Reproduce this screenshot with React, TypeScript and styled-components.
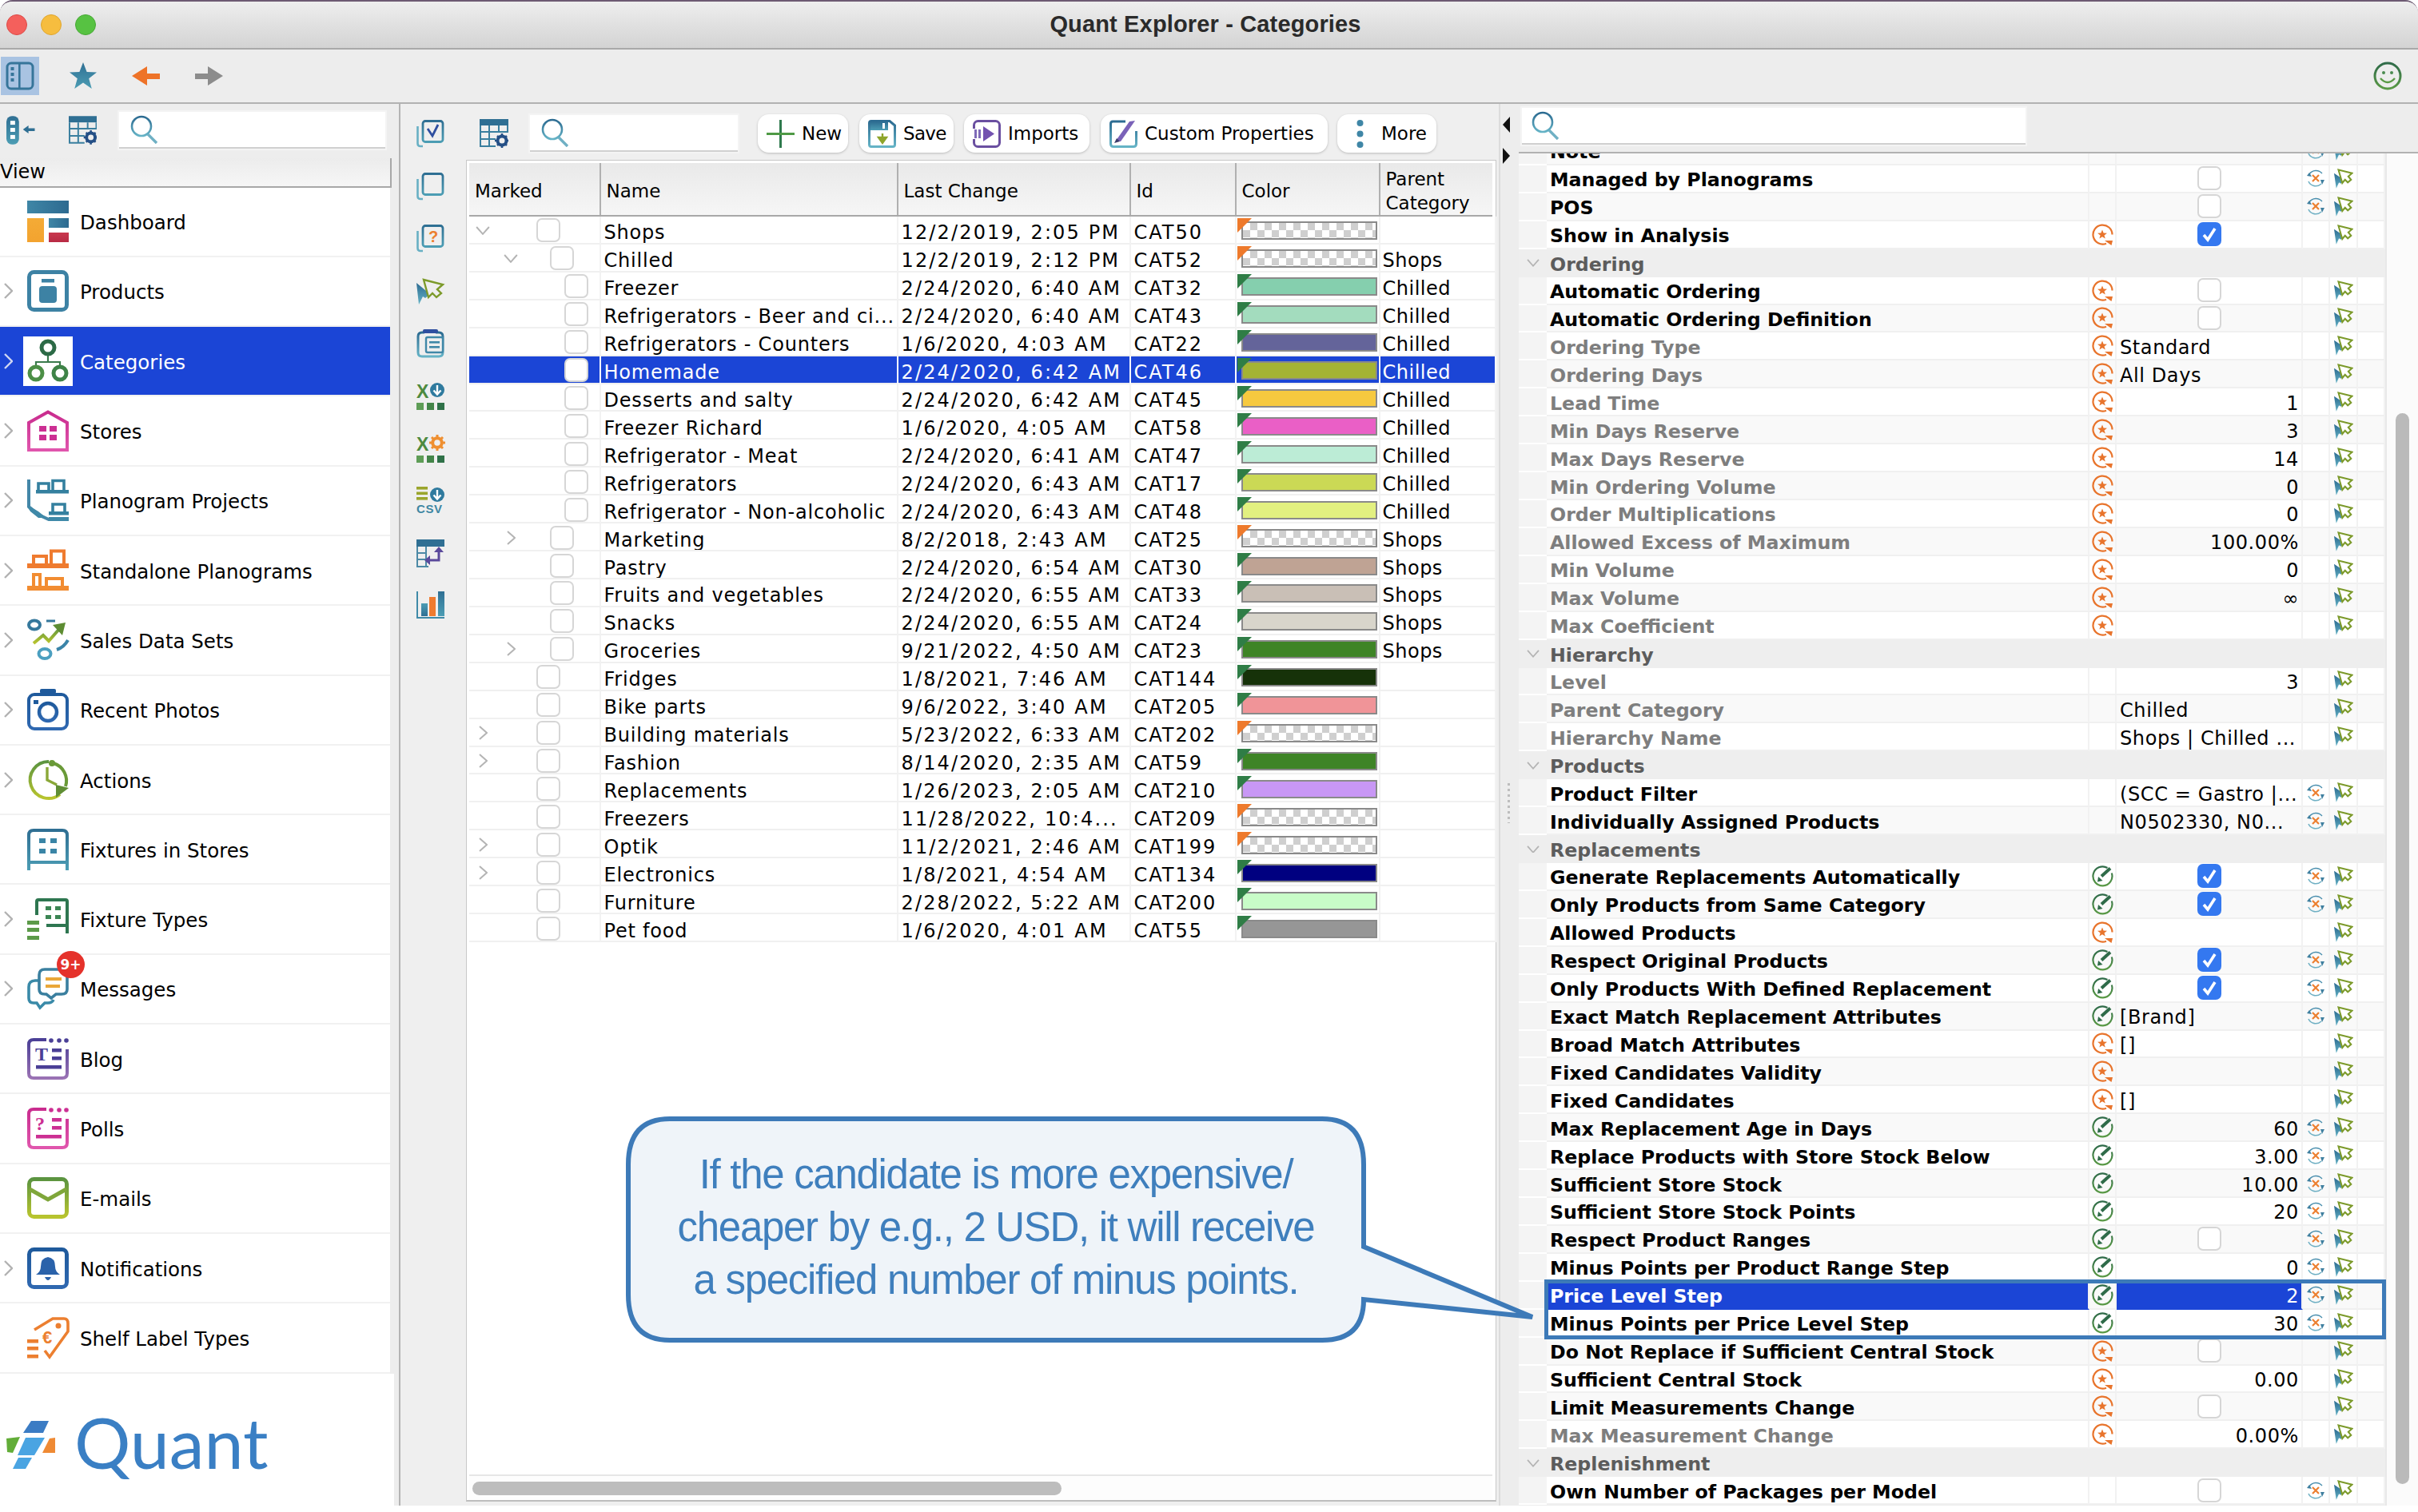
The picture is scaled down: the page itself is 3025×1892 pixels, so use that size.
import React from "react";
import styled, { createGlobalStyle } from "styled-components";

const UI = `"DejaVu Sans", "Liberation Sans", sans-serif`;

const Global = createGlobalStyle`
  html, body { margin: 0; padding: 0; background: #ffffff; }
  body { font-family: ${UI}; color: #000; }
  #root { width: 3025px; height: 1892px; overflow: hidden; }
  * { box-sizing: border-box; }
`;

/* ---------- shell ---------- */
const Page = styled.div`
  position: relative;
  width: 3025px;
  height: 1892px;
  background: #fff;
`;
const Window = styled.div`
  width: 3025px;
  height: 1884px;
  border-radius: 16px 16px 0 0;
  overflow: hidden;
  display: flex;
  flex-direction: column;
  background: #ededed;
  border-top: 2px solid #6d5a72;
`;
const TitleBar = styled.header`
  height: 60px;
  flex: none;
  display: grid;
  grid-template-columns: 1fr auto 1fr;
  align-items: center;
  background: linear-gradient(#eeeeee, #d3d3d3);
  border-bottom: 2px solid #a9a9a9;
`;
const Lights = styled.div`
  display: flex;
  gap: 17px;
  padding-left: 8px;
`;
const Light = styled.span<{ $c: string; $b: string }>`
  width: 26px;
  height: 26px;
  border-radius: 50%;
  background: ${(p) => p.$c};
  border: 1px solid ${(p) => p.$b};
`;
const Title = styled.h1`
  margin: 0 0 2px -9px;
  font: 700 29px "Liberation Sans", Arial, sans-serif;
  color: #2a2a2a;
  letter-spacing: 0.15px;
`;
const TopBar = styled.div`
  height: 68px;
  flex: none;
  display: flex;
  align-items: center;
  background: #ededed;
  border-bottom: 2px solid #b2b2b2;
`;
const ToggleBtn = styled.div`
  width: 48px;
  height: 48px;
  margin-left: 1px;
  background: #a9c3e2;
  display: flex;
  align-items: center;
  justify-content: center;
`;
const TopIcon = styled.div<{ $ml: number }>`
  margin-left: ${(p) => p.$ml}px;
  display: flex;
`;
const TopSpacer = styled.div`
  flex: 1;
`;
const Body = styled.div`
  flex: 1;
  min-height: 0;
  display: flex;
`;

/* ---------- left ---------- */
const LeftCol = styled.aside`
  width: 501px;
  flex: none;
  display: flex;
  flex-direction: column;
  border-right: 2px solid #b4b4b4;
  background: #ededed;
`;
const LeftTools = styled.div`
  height: 68px;
  flex: none;
  display: flex;
  align-items: center;
  padding: 0 17px 3px 8px;
`;
const Search = styled.div<{ $w: number }>`
  width: ${(p) => p.$w}px;
  height: 46px;
  background: #fff;
  border-bottom: 2px solid #d0d0d0;
  box-shadow: 0 0 0 2px #f4f4f4;
  display: flex;
  align-items: center;
  padding-left: 14px;
  flex: none;
`;
const ToolGap = styled.div<{ $w: number }>`
  width: ${(p) => p.$w}px;
  flex: none;
`;
const ViewHead = styled.div`
  width: 490px;
  height: 36.5px;
  flex: none;
  display: flex;
  align-items: center;
  font-size: 24px;
  background: linear-gradient(#ececec, #f6f6f6);
  border-right: 2px solid #a8a8a8;
  border-bottom: 2px solid #a8a8a8;
`;
const NavList = styled.nav`
  width: 488px;
  flex: none;
  background: #fff;
`;
const NavRow = styled.div<{ $on?: boolean }>`
  height: 87.3px;
  display: flex;
  align-items: center;
  border-bottom: 2px solid #f1f1f1;
  background: ${(p) => (p.$on ? "#1b45d6" : "#fff")};
  color: ${(p) => (p.$on ? "#fff" : "#000")};
`;
const NavChevron = styled.div`
  width: 34px;
  flex: none;
  padding-left: 5px;
  display: flex;
`;
const NavIcon = styled.div<{ $on?: boolean }>`
  position: relative;
  width: 52px;
  height: 52px;
  flex: none;
  background: ${(p) => (p.$on ? "#fff" : "transparent")};
  box-shadow: ${(p) => (p.$on ? "0 0 0 5px #fff" : "none")};
`;
const Badge = styled.span`
  position: absolute;
  left: 37px;
  top: -21px;
  width: 35px;
  height: 34px;
  border-radius: 50%;
  background: #e5322b;
  color: #fff;
  font: 700 17px ${UI};
  display: flex;
  align-items: center;
  justify-content: center;
`;
const NavLabel = styled.span`
  margin-left: 14px;
  padding-top: 3px;
  font-size: 24.5px;
`;
const LogoArea = styled.div`
  flex: 1;
  width: 493px;
  background: #fff;
  display: flex;
  align-items: flex-start;
  padding: 58px 0 0 7px;
`;
const LogoText = styled.span`
  margin: -23px 0 0 22px;
  font: 400 88px/100px Lato, "Open Sans", sans-serif;
  color: #3a7fc4;
`;

/* ---------- center ---------- */
const Center = styled.main`
  width: 1376px;
  flex: none;
  display: flex;
  background: #efefef;
  border-right: 2px solid #dcdcdc;
`;
const Strip = styled.div`
  width: 82px;
  flex: none;
  display: flex;
  flex-direction: column;
  align-items: center;
  gap: 30.6px;
  padding: 20px 7px 0 0;
`;
const CenterMain = styled.div`
  flex: 1;
  min-width: 0;
  display: flex;
  flex-direction: column;
  padding-right: 3px;
`;
const CenterTools = styled.div`
  height: 70px;
  flex: none;
  display: flex;
  align-items: center;
  padding: 4px 0 0 17px;
`;
const ToolButton = styled.button<{ $w: number; $mr: number; $sp?: number }>`
  width: ${(p) => p.$w}px;
  height: 48px;
  flex: none;
  display: flex;
  align-items: center;
  gap: 9px;
  padding: 0 0 0 11px;
  margin-right: ${(p) => p.$mr}px;
  border: 0;
  border-radius: 14px;
  background: #fff;
  box-shadow: 0 1px 3px #bcbcbc;
  font: 400 23px ${UI};
  letter-spacing: ${(p) => p.$sp ?? 0}px;
  color: #000;
`;
const TablePanel = styled.section`
  flex: 1;
  min-height: 0;
  display: flex;
  flex-direction: column;
  margin-bottom: 5px;
  padding: 3px 4px 0 3px;
  background: #fff;
  border: 1.5px solid #c8c8c8;
  border-bottom: 2px solid #bdbdbd;
`;
const COLS = "164.5px 372px 291px 132px 180px 145px";
const HeadRow = styled.div`
  height: 67px;
  flex: none;
  display: grid;
  grid-template-columns: ${COLS};
  background: linear-gradient(#e9e9e9, #f6f6f6);
  border-bottom: 2px solid #a8a8a8;
`;
const HeadCell = styled.div`
  display: flex;
  align-items: center;
  padding: 5px 0 0 7px;
  font-size: 23px;
  line-height: 30px;
  border-right: 2px solid #b0b0b0;
  &:last-child { border-right: 0; }
`;
const TableRows = styled.div`
  flex: 1;
  min-height: 0;
`;
const TRow = styled.div<{ $on?: boolean }>`
  height: 34.93px;
  display: grid;
  grid-template-columns: ${COLS};
  color: ${(p) => (p.$on ? "#fff" : "#000")};
`;
const TCell = styled.div<{ $on?: boolean; $sp?: number }>`
  display: flex;
  align-items: center;
  padding: 8px 0 0 4px;
  font-size: 24px;
  letter-spacing: ${(p) => p.$sp ?? 0}px;
  white-space: nowrap;
  overflow: hidden;
  background: ${(p) => (p.$on ? "#1b45d6" : "#fff")};
  border-right: 2px solid ${(p) => (p.$on ? "#fff" : "#f2f2f2")};
  border-bottom: 2px solid #f0f0f0;
`;
const MarkCell = styled(TCell)`
  padding: 2px 0 0 0;
  overflow: visible;
`;
const Toggle = styled.div<{ $level: number; $right?: boolean }>`
  width: ${(p) => 84 + p.$level * 17.4}px;
  padding-left: ${(p) => 8 + p.$level * 34.5 + (p.$right ? 4 : 0)}px;
  flex: none;
  display: flex;
`;
const Box = styled.span<{ $on?: boolean }>`
  width: 30px;
  height: 30px;
  flex: none;
  border-radius: 7px;
  background: ${(p) => (p.$on ? "#3478f0" : "#fff")};
  border: ${(p) => (p.$on ? "0" : "2px solid #d6d6d6")};
  display: flex;
  align-items: center;
  justify-content: center;
`;
const ColorCell = styled(TCell)`
  position: relative;
  padding: 3px 0 0 6px;
`;
const ParentCell = styled(TCell)`
  padding-left: 3px;
`;
const Bar = styled.div<{ $c?: string }>`
  width: 170px;
  height: 23px;
  border: 2px solid #8a8a8a;
  background: ${(p) =>
    p.$c
      ? p.$c
      : "repeating-conic-gradient(#cfcfcf 0 25%, #fff 0 50%) 0 0 / 18px 18px"};
`;
const Corner = styled.span<{ $c: string }>`
  position: absolute;
  left: 1px;
  top: 2px;
  width: 0;
  height: 0;
  border-top: 18px solid ${(p) => p.$c};
  border-right: 18px solid transparent;
`;
const HScroll = styled.div`
  height: 32px;
  flex: none;
  padding: 7px 0 0 4px;
  border-top: 2px solid #e6e6e6;
  background: #fdfdfd;
`;
const HThumb = styled.div`
  width: 737px;
  height: 17px;
  border-radius: 9px;
  background: #bdbdbd;
`;

/* ---------- splitter ---------- */
const Splitter = styled.div`
  width: 23px;
  flex: none;
  position: relative;
  display: flex;
  flex-direction: column;
  background: #ededed;
  padding: 16px 0 0 3px;
  gap: 19px;
`;
const Grip = styled.div`
  position: absolute;
  left: 9px;
  top: 850px;
  width: 3px;
  height: 50px;
  background: repeating-linear-gradient(#bdbdbd 0 3px, transparent 3px 7px);
`;

/* ---------- right ---------- */
const RightCol = styled.section`
  flex: 1;
  min-width: 0;
  display: flex;
  flex-direction: column;
`;
const RightTools = styled.div`
  height: 60px;
  flex: none;
  display: flex;
  align-items: flex-start;
  padding: 5px 0 0 4px;
`;
const RightSearch = styled(Search)`
  padding-left: 12px;
`;
const RightBody = styled.div`
  flex: 1;
  min-height: 0;
  display: flex;
  border-top: 2px solid #b2b2b2;
  overflow: hidden;
`;
const PropList = styled.div`
  width: 1084px;
  flex: none;
  overflow: hidden;
`;
const PropInner = styled.div`
  margin-top: -20px;
`;
const PCOLS = "35px 679px 34px 233px 34px 35px 34px";
const PRow = styled.div`
  height: 34.925px;
  display: grid;
  grid-template-columns: ${PCOLS};
`;
const Gutter = styled.div`
  background: #f4f4f4;
  border-bottom: 2px solid #fff;
`;
const PLabel = styled.div<{ $gray?: boolean; $on?: boolean; $z?: boolean }>`
  display: flex;
  align-items: center;
  padding: 4px 0 0 4px;
  font-size: 23.7px;
  font-weight: 700;
  white-space: nowrap;
  overflow: hidden;
  color: ${(p) => (p.$on ? "#fff" : p.$gray ? "#7e7e7e" : "#000")};
  background: ${(p) => (p.$on ? "#1b45d6" : p.$z ? "#f9f9f9" : "#fff")};
  border-bottom: 2px solid ${(p) => (p.$on ? "#1b45d6" : "#f0f0f0")};
  border-right: 2px solid #f2f2f2;
`;
const PCell = styled.div<{ $z?: boolean }>`
  display: flex;
  align-items: center;
  justify-content: center;
  background: ${(p) => (p.$z ? "#f9f9f9" : "#fff")};
  border-bottom: 2px solid #f0f0f0;
  border-right: 2px solid #f2f2f2;
`;
const PValue = styled.div<{ $on?: boolean; $z?: boolean; $align: string; $box?: boolean }>`
  display: flex;
  align-items: center;
  justify-content: ${(p) => p.$align};
  padding: ${(p) => (p.$box ? "0" : "4px")} 3px 0 4px;
  font-size: 24px;
  letter-spacing: 0.6px;
  white-space: nowrap;
  overflow: hidden;
  color: ${(p) => (p.$on ? "#fff" : "#000")};
  background: ${(p) => (p.$on ? "#1b45d6" : p.$z ? "#f9f9f9" : "#fff")};
  border-bottom: 2px solid ${(p) => (p.$on ? "#1b45d6" : "#f0f0f0")};
  border-right: 2px solid #f2f2f2;
`;
const GroupRow = styled.div`
  height: 34.925px;
  display: flex;
  align-items: center;
  background: #eeeeee;
`;
const GroupChevron = styled.div`
  width: 35px;
  flex: none;
  padding-left: 10px;
  display: flex;
`;
const GroupLabel = styled.span`
  padding: 3px 0 0 4px;
  font-size: 23.7px;
  font-weight: 700;
  color: #5c5c5c;
`;
const VTrack = styled.div`
  width: 41px;
  flex: none;
  padding: 325px 0 0 11px;
  background: #fbfbfb;
  border-left: 2px solid #e8e8e8;
`;
const VThumb = styled.div`
  width: 17px;
  height: 1340px;
  border-radius: 9px;
  background: #bababa;
`;

/* ---------- annotation ---------- */
const Highlight = styled.div`
  position: absolute;
  left: 1932px;
  top: 1601px;
  width: 1053px;
  height: 75px;
  border: 5px solid #3d7ab8;
  pointer-events: none;
`;
const BubbleShape = styled.svg`
  position: absolute;
  left: 780px;
  top: 1395px;
`;
const BubbleText = styled.div`
  position: absolute;
  left: 786px;
  top: 1400px;
  width: 920px;
  height: 272px;
  display: flex;
  align-items: center;
  justify-content: center;
  text-align: center;
  font: 400 51px/66px "Liberation Sans", Arial, sans-serif;
  letter-spacing: -1.3px;
  color: #3f7fbd;
`;
const Defs = styled.svg`
  position: absolute;
  width: 0;
  height: 0;
`;

/* ---------- icons ---------- */
const G = ({ id, a, b, h }: { id: string; a: string; b: string; h?: boolean }) => (
  <linearGradient id={id} x1="0" y1="0" x2={h ? "1" : "0"} y2={h ? "0" : "1"}>
    <stop offset="0" stopColor={a} />
    <stop offset="1" stopColor={b} />
  </linearGradient>
);
const GradientDefs = () => (
  <Defs aria-hidden="true">
    <defs>
      <G id="teal" a="#2f6f93" b="#4c9db4" />
      <G id="tealR" a="#4c9db4" b="#2f6f93" />
      <G id="tealH" a="#3f86a6" b="#2d6a90" h />
      <G id="orange" a="#ef7d2d" b="#f19a34" />
      <G id="amber" a="#f4ab36" b="#f3a32f" />
      <G id="red" a="#c8384e" b="#b82a44" />
      <G id="green" a="#2f6b49" b="#5a9a46" />
      <G id="lime" a="#5b9440" b="#b8c42e" />
      <G id="pink" a="#c92c8e" b="#e056ad" />
      <G id="blue" a="#1f5a9c" b="#2f68b0" />
      <G id="purple" a="#4a3f96" b="#9a72b4" />
      <G id="sky" a="#2c6b91" b="#65b3c6" />
    </defs>
  </Defs>
);

const Chevron = ({ on }: { on?: boolean }) => (
  <svg width="11" height="20" viewBox="0 0 11 20" fill="none">
    <path d="M1 1 L10 10 L1 19" stroke={on ? "#cfd6f2" : "#b2b2b2"} strokeWidth="2.4" />
  </svg>
);
const ChevronDown = ({ s = 18 }: { s?: number }) => (
  <svg width={s} height={s * 0.6} viewBox="0 0 18 11" fill="none">
    <path d="M1 1 L9 10 L17 1" stroke="#b4b4b4" strokeWidth="2" />
  </svg>
);
const ChevronRight = () => (
  <svg width="11" height="18" viewBox="0 0 11 18" fill="none">
    <path d="M1 1 L10 9 L1 17" stroke="#b4b4b4" strokeWidth="2" />
  </svg>
);
const SearchGlass = () => (
  <svg width="35" height="36" viewBox="0 0 35 36" fill="none">
    <circle cx="14" cy="14" r="12" stroke="url(#sky)" strokeWidth="2.6" />
    <path d="M22 24 L33 35" stroke="#6fb0c4" strokeWidth="3.4" />
  </svg>
);
const PanelIcon = () => (
  <svg width="36" height="36" viewBox="0 0 36 36" fill="none">
    <rect x="2" y="2" width="32" height="32" rx="5" stroke="#36759a" strokeWidth="3" />
    <rect x="16" y="2" width="2.6" height="32" fill="#36759a" />
    <rect x="6.5" y="7" width="4" height="4" fill="#36759a" />
    <rect x="6.5" y="14" width="4" height="4" fill="#36759a" />
    <rect x="6.5" y="21" width="4" height="4" fill="#36759a" />
  </svg>
);
const StarIcon = () => (
  <svg width="36" height="36" viewBox="0 0 36 36">
    <path fill="url(#teal)" d="M18 1 L22.6 13 L35 13.4 L25.2 21.2 L28.8 34 L18 26.6 L7.2 34 L10.8 21.2 L1 13.4 L13.4 13 Z" />
  </svg>
);
const FlipSvg = styled.svg<{ $flip?: boolean }>`
  transform: ${(p) => (p.$flip ? "scaleX(-1)" : "none")};
`;
const ArrowIcon = ({ c, flip }: { c: string; flip?: boolean }) => (
  <FlipSvg width="36" height="24" viewBox="0 0 36 24" $flip={flip}>
    <path fill={c} d="M0 12 L19 0 L19 9 L35 9 L35 16 L19 16 L19 24 Z" />
  </FlipSvg>
);
const SmileIcon = () => (
  <svg width="36" height="36" viewBox="0 0 36 36" fill="none">
    <circle cx="18" cy="18" r="16" stroke="url(#green)" strokeWidth="3" />
    <circle cx="13" cy="14" r="2" fill="#4a8a50" />
    <circle cx="23" cy="14" r="2" fill="#4a8a50" />
    <path d="M9 21 Q18 31 27 21" stroke="#5a9a46" strokeWidth="2.4" />
  </svg>
);
const CollapseIcon = () => (
  <svg width="36" height="36" viewBox="0 0 36 36">
    <rect x="0" y="0" width="16" height="36" rx="7" fill="url(#teal)" />
    <rect x="5" y="6" width="6" height="5" fill="#fff" />
    <rect x="5" y="15" width="6" height="5" fill="#fff" />
    <rect x="5" y="24" width="6" height="5" fill="#fff" />
    <path fill="#2f6f93" d="M21 17 L28 12 L28 15.5 L36 15.5 L36 19 L28 19 L28 22 Z" />
  </svg>
);
const TableGear = () => (
  <svg width="36" height="36" viewBox="0 0 36 36" fill="none">
    <rect x="0" y="0" width="36" height="8" fill="#2f6f93" />
    <path d="M1 8 V34 H20 M1 16 H35 M1 25 H20 M12 8 V34 M24 8 V17 M35 8 V17" stroke="#3a7f9f" strokeWidth="2" />
    <circle cx="28" cy="27" r="5.5" stroke="#244f86" strokeWidth="4" />
    <path d="M28 18 V21 M28 33 V36 M19 27 H22 M34 27 H37 M22 21 L24 23 M34 21 L32 23 M22 33 L24 31 M34 33 L32 31" stroke="#244f86" strokeWidth="2.6" />
  </svg>
);

/* nav icons */
const I = styled.svg.attrs({ width: 52, height: 52, viewBox: "0 0 52 52", fill: "none" })`
  display: block;
  overflow: visible;
`;
const DashIcon = () => (
  <I>
    <rect x="0" y="0" width="52" height="16" fill="url(#tealH)" />
    <rect x="0" y="22" width="21" height="30" fill="url(#amber)" />
    <rect x="27" y="22" width="25" height="12" fill="url(#tealH)" />
    <rect x="27" y="40" width="25" height="12" fill="url(#red)" />
  </I>
);
const ProductIcon = () => (
  <I>
    <rect x="2.5" y="2.5" width="47" height="47" rx="6" stroke="#3d82a4" strokeWidth="5" />
    <rect x="18" y="11" width="16" height="4.5" fill="#3d82a4" />
    <rect x="15" y="20" width="22" height="21" rx="4" fill="#3d82a4" />
  </I>
);
const CategoryIcon = () => (
  <I>
    <path d="M26 18 V27 M11 34 V27 H41 V34" stroke="#3a7a4c" strokeWidth="2.2" />
    <circle cx="26" cy="9" r="8" stroke="#2c6a46" strokeWidth="5" />
    <circle cx="11" cy="41" r="8" stroke="#4c8f46" strokeWidth="5" />
    <circle cx="41" cy="41" r="8" stroke="#3e8347" strokeWidth="5" />
  </I>
);
const StoreIcon = () => (
  <I>
    <path d="M2 50 V16 L26 2.5 L50 16 V50 Z" stroke="url(#pink)" strokeWidth="4" />
    <g fill="#cc2f93">
      <rect x="15" y="20" width="9" height="7" />
      <rect x="28" y="20" width="9" height="7" />
      <rect x="15" y="31" width="9" height="7" />
      <rect x="28" y="31" width="9" height="7" />
    </g>
  </I>
);
const ShelfSet = ({ c }: { c: string }) => (
  <>
    <rect x="11" y="13" width="41" height="4.5" fill={c} />
    <path d="M14 13 V5 H27 V13 M32 13 V1.5 H46 V13" stroke={c} strokeWidth="3.6" />
    <rect x="27" y="40" width="25" height="4.5" fill={c} />
  </>
);
const PlanogramIcon = () => (
  <I>
    <ShelfSet c="#34809f" />
    <path d="M32 40 V31 H47 V40" stroke="#34809f" strokeWidth="3.6" />
    <path d="M2 0 V34 L14 44 L27 50 H52" stroke="#4487a8" strokeWidth="4" />
    <rect x="27" y="47" width="25" height="5" fill="#3f89a8" />
    <path d="M0 34 L4 34 L14 40 L24 48 L14 48 L4 40 Z" fill="#3f89a8" />
  </I>
);
const StandaloneIcon = () => (
  <I>
    <rect x="0" y="17" width="52" height="6" fill="#ef7b2f" />
    <path d="M8 17 V8 H24 V17 M30 17 V1.5 H46 V17" stroke="#ef7b2f" strokeWidth="4" />
    <rect x="0" y="45" width="52" height="6" fill="#f28c31" />
    <path d="M8 45 V31 H16 V45 M24 45 V36 H44 V45" stroke="#f28c31" strokeWidth="4" />
  </I>
);
const SalesIcon = () => (
  <I>
    <ellipse cx="9" cy="7" rx="7" ry="5.5" stroke="#35789c" strokeWidth="4" />
    <ellipse cx="22" cy="43" rx="7.5" ry="6" stroke="#4b9fc0" strokeWidth="4" />
    <path d="M24 2 H35" stroke="#35789c" strokeWidth="3" />
    <path d="M37 38 Q46 35 51 26" stroke="#3a84a8" strokeWidth="4" />
    <path d="M8 30 L20 20 L27 27 L42 10" stroke="url(#lime)" strokeWidth="4" />
    <path d="M32 7 L48 4 L44 20 Z" fill="#5d8c32" />
  </I>
);
const PhotoIcon = () => (
  <I>
    <rect x="2" y="7" width="48" height="43" rx="7" stroke="url(#blue)" strokeWidth="4" />
    <rect x="16" y="0" width="20" height="6" rx="2" fill="#1f5a9c" />
    <circle cx="26" cy="29" r="11" stroke="url(#blue)" strokeWidth="4.5" />
    <rect x="8" y="14" width="6" height="5" fill="#1f5a9c" />
  </I>
);
const ActionsIcon = () => (
  <I>
    <path d="M27 3 A23 23 0 1 0 41 44" stroke="url(#lime)" strokeWidth="4" />
    <path d="M33 5 A23 23 0 0 1 48 34" stroke="#6a9a38" strokeWidth="4" />
    <circle cx="31" cy="5" r="4" fill="#6a9a38" />
    <path d="M25 10 V26 L37 32" stroke="#8aa838" strokeWidth="3.4" />
    <path d="M36 32 L52 36 L36 48 Z" fill="#5f8e34" />
  </I>
);
const FixtureIcon = () => (
  <I>
    <path d="M2 52 V8 Q2 2 8 2 H44 Q50 2 50 8 V52 M2 42 H50" stroke="url(#teal)" strokeWidth="4" />
    <g fill="#3a85a6">
      <rect x="15" y="12" width="8" height="6" />
      <rect x="29" y="12" width="8" height="6" />
      <rect x="15" y="25" width="8" height="6" />
      <rect x="29" y="25" width="8" height="6" />
    </g>
  </I>
);
const FixtureTypeIcon = () => (
  <I>
    <path d="M12 21 V4 Q12 2 14 2 H48 Q50 2 50 4 V44 M24 34 H50" stroke="#2e7650" strokeWidth="4" />
    <g fill="#3b8553">
      <rect x="23" y="10" width="7" height="5" />
      <rect x="35" y="10" width="7" height="5" />
      <rect x="23" y="21" width="7" height="5" />
      <rect x="35" y="21" width="7" height="5" />
    </g>
    <g fill="#5c9a49">
      <rect x="0" y="28" width="15" height="5" />
      <rect x="0" y="37" width="15" height="5" />
      <rect x="0" y="47" width="15" height="5" />
    </g>
  </I>
);
const MessageIcon = () => (
  <I>
    <path d="M14 16 H10 Q2 16 2 24 V38 Q2 44 8 44 H12 L16 50 L22 44 H26 Q31 44 33 40" stroke="#3a8aa8" strokeWidth="3.6" />
    <path d="M22 2 H43 Q50 2 50 9 V27 Q50 33 43 33 H36 L30 38 L24 33 H22 Q15 33 15 27 V9 Q15 2 22 2 Z" fill="#fff" stroke="#3a7f9f" strokeWidth="3.6" />
    <rect x="23" y="12" width="20" height="4" fill="#eaa739" />
    <rect x="23" y="21" width="18" height="4" fill="#eaa739" />
  </I>
);
const SvgLetter = styled.text<{ $sans?: boolean }>`
  font-family: ${(p) => (p.$sans ? '"Liberation Sans", sans-serif' : '"Liberation Serif", serif')};
  font-weight: 700;
`;
const DotDoc = ({ stroke, fill, glyph }: { stroke: string; fill: string; glyph: string }) => (
  <I>
    <path d="M24 2 H8 Q2 2 2 8 V44 Q2 50 8 50 H44 Q50 50 50 44 V14" stroke={stroke} strokeWidth="4" />
    <circle cx="30" cy="3" r="2.8" fill={fill} />
    <circle cx="40" cy="3" r="2.8" fill={fill} />
    <circle cx="49" cy="3" r="2.8" fill={fill} />
    <rect x="31" y="13" width="12" height="4.5" fill={fill} />
    <rect x="31" y="23" width="12" height="4.5" fill={fill} />
    <rect x="11" y="34" width="32" height="4.5" fill={fill} />
    <SvgLetter x="10" y="28" fontSize="24" fill={fill}>{glyph}</SvgLetter>
  </I>
);
const MailIcon = () => (
  <I>
    <rect x="2.5" y="2.5" width="47" height="47" rx="6" stroke="url(#lime)" strokeWidth="5" />
    <path d="M3 15 L26 28 L49 15" stroke="#7fa63a" strokeWidth="5" />
  </I>
);
const BellIcon = () => (
  <I>
    <rect x="2.5" y="2.5" width="47" height="47" rx="6" stroke="url(#blue)" strokeWidth="5" />
    <path d="M26 12 Q35 13 35 24 Q35 30 41 34 H11 Q17 30 17 24 Q17 13 26 12 Z" fill="#2a62aa" />
    <path d="M22 37 H30 Q28 41 26 41 Q24 41 22 37 Z" fill="#2a62aa" />
  </I>
);
const TagIcon = () => (
  <I>
    <path d="M9 16 L32 2 H46 Q51 2 51 8 V18 L28 50 L22 42" stroke="#ec7f30" strokeWidth="3.6" />
    <circle cx="39" cy="11" r="3.5" fill="#ec7f30" />
    <SvgLetter $sans x="19" y="33" fontSize="22" fill="#ec7f30">€</SvgLetter>
    <rect x="0" y="28" width="14" height="4.5" fill="#ec7f30" />
    <rect x="0" y="37" width="14" height="4.5" fill="#ec7f30" />
    <rect x="0" y="47" width="14" height="4.5" fill="#ec7f30" />
  </I>
);
const LogoMark = () => (
  <svg width="64" height="62" viewBox="0 0 64 62">
    <path fill="#3b7cc4" d="M32 1 H54 L47 16 H22 Z" />
    <path fill="#62ad38" d="M1 23 L18 21 L9 41 L2 40 Z" />
    <path fill="#4aa4e2" d="M25 22 H49 L36 44 H15 Z" />
    <path fill="#ef8a34" d="M55 23 L62 22 V41 L46 41 Z" />
    <path fill="#4aa4e2" d="M16 47 H33 L25 61 H9 Z" />
  </svg>
);

/* strip icons */
const S = styled.svg.attrs({ width: 35, height: 35, viewBox: "0 0 35 35", fill: "none" })`
  display: block;
  flex: none;
  overflow: visible;
`;
const DocsBase = () => (
  <>
    <path d="M8 33 H5 Q1.5 33 1.5 29.5 V8" stroke="#68b0c4" strokeWidth="2.6" />
    <rect x="8" y="1.5" width="25" height="26" rx="3" stroke="url(#teal)" strokeWidth="2.8" />
  </>
);
const CheckDocs = () => (
  <S>
    <DocsBase />
    <path d="M14 11 L20 20 L27 6" stroke="#2f4fa0" strokeWidth="2.8" />
  </S>
);
const PlainDocs = () => (
  <S>
    <DocsBase />
  </S>
);
const QuestionDocs = () => (
  <S>
    <DocsBase />
    <SvgLetter $sans x="15" y="22" fontSize="20" fill="#ec7f30">?</SvgLetter>
  </S>
);
const PointerBig = () => (
  <S>
    <path d="M0 7 L17 21 L11 26 L8 24 L3 34 Z" fill="url(#sky)" />
    <path d="M9 3 L33 9 L26 15 L31 20 L25 25 L20 20 L15 25 Z" fill="#efefef" stroke="#7c9a2a" strokeWidth="2.4" />
  </S>
);
const ClipIcon = () => (
  <S>
    <path d="M10 4 H7 Q2 4 2 9 V29 Q2 34 7 34 H28 Q33 34 33 29 V9 Q33 4 28 4 H24" stroke="url(#sky)" strokeWidth="3" />
    <rect x="8" y="0" width="19" height="5" rx="2" fill="#2f4fa0" />
    <rect x="12" y="10" width="21" height="19" rx="2" fill="#efefef" stroke="#4088a8" strokeWidth="2.4" />
    <rect x="16" y="15" width="13" height="2.6" fill="#4088a8" />
    <rect x="16" y="21" width="13" height="2.6" fill="#4088a8" />
  </S>
);
const GreenSquares = () => (
  <>
    <rect x="0" y="26" width="9" height="9" fill="#5e9d56" />
    <rect x="13" y="26" width="9" height="9" fill="#438548" />
    <rect x="26" y="26" width="9" height="9" fill="#2f7148" />
  </>
);
const DownDisc = () => (
  <>
    <circle cx="26" cy="10" r="9" fill="#2f7a9e" />
    <path d="M26 4 V15 M21.5 10.5 L26 15.5 L30.5 10.5" stroke="#fff" strokeWidth="2.4" />
  </>
);
const XDown = () => (
  <S>
    <SvgLetter $sans x="0" y="20" fontSize="23" fill="#4d8a3f">X</SvgLetter>
    <DownDisc />
    <GreenSquares />
  </S>
);
const XGear = () => (
  <S>
    <SvgLetter $sans x="0" y="20" fontSize="23" fill="#4d8a3f">X</SvgLetter>
    <circle cx="26" cy="10" r="5.8" stroke="#ef8f30" strokeWidth="4" />
    <path d="M26 0 V3 M26 17 V20 M16 10 H19 M33 10 H36 M19 3 L21 5 M33 3 L31 5 M19 17 L21 15 M33 17 L31 15" stroke="#ef8f30" strokeWidth="3" />
    <GreenSquares />
  </S>
);
const CsvIcon = () => (
  <S>
    <rect x="0" y="0" width="14" height="3.6" fill="#9aa52c" />
    <rect x="0" y="6.5" width="14" height="3.6" fill="#9aa52c" />
    <rect x="0" y="13" width="14" height="3.6" fill="#9aa52c" />
    <DownDisc />
    <SvgLetter $sans x="0" y="33" fontSize="15" fill="#3f87a3" letterSpacing="0.6">CSV</SvgLetter>
  </S>
);
const ExportTable = () => (
  <S>
    <rect x="0" y="0" width="35" height="9" fill="#2f6f93" />
    <path d="M1 9 V34 H15 M1 17 H12 M1 25 H12 M12 9 V34" stroke="#4d8aa6" strokeWidth="2" />
    <path d="M28 14 V26 H14" stroke="#5b4a9c" strokeWidth="3" />
    <path d="M22 16 L28 9 L34 16 Z M17 20 L10 26 L17 32 Z" fill="#5b4a9c" />
  </S>
);
const ChartIcon = () => (
  <S>
    <path d="M1 0 V33 H35" stroke="#3f8aa8" strokeWidth="2" />
    <rect x="6" y="15" width="8" height="16" fill="url(#tealR)" />
    <rect x="16" y="7" width="8" height="24" fill="#ef7b2f" />
    <rect x="27" y="0" width="8" height="31" fill="url(#teal)" />
  </S>
);

/* button icons */
const PlusIcon = () => (
  <S>
    <path d="M17.5 0 V35" stroke="#2f7a4e" strokeWidth="3" />
    <path d="M0 17.5 H35" stroke="#4f9a45" strokeWidth="3" />
  </S>
);
const SaveIcon = () => (
  <S>
    <path d="M4 1.5 H27 L33.5 7 V31 Q33.5 33.5 31 33.5 H4 Q1.5 33.5 1.5 31 V4 Q1.5 1.5 4 1.5 Z" stroke="url(#sky)" strokeWidth="3" />
    <path d="M3 3 H25 V13 H3 Z" fill="url(#teal)" />
    <rect x="18" y="4" width="3" height="7" fill="#fff" />
    <path d="M18 17 V24 M13 22 H23 L18 29 Z" stroke="#8ea52b" strokeWidth="2.4" fill="#8ea52b" />
  </S>
);
const ImportIcon = () => (
  <S>
    <rect x="1.5" y="1.5" width="32" height="32" rx="5" stroke="#6a4fa0" strokeWidth="3" />
    <rect x="0" y="11" width="3" height="13" fill="#fff" />
    <rect x="2" y="12" width="3" height="11" fill="#7e6ab8" />
    <rect x="7" y="12" width="3" height="11" fill="#7e6ab8" />
    <path d="M13 8 L27 17.5 L13 27 Z" fill="#7352b0" />
  </S>
);
const CustomIcon = () => (
  <S>
    <path d="M20 2 H4 Q1.5 2 1.5 5 V30 Q1.5 33.5 5 33.5 H30 Q33.5 33.5 33.5 30 V14" stroke="url(#sky)" strokeWidth="3" />
    <path d="M8 26 L25 2 L32 1 L14 27 Z" fill="#7a62b8" />
    <path d="M6 29 L9 23 L13 27 Z" fill="#3c3c6a" />
  </S>
);
const DotsIcon = () => (
  <S>
    <circle cx="17.5" cy="4" r="4" fill="#3f86a6" />
    <circle cx="17.5" cy="17.5" r="4" fill="#3f86a6" />
    <circle cx="17.5" cy="31" r="4" fill="#3f86a6" />
  </S>
);

/* property icons */
const OrangeFlag = () => (
  <svg width="27" height="27" viewBox="0 0 27 27" fill="none">
    <path d="M25.5 13.5 A12 12 0 1 0 18 24.7" stroke="#e8742c" strokeWidth="2.2" />
    <path d="M13 7.5 L14.6 11.6 L19 11.8 L15.5 14.4 L16.8 18.6 L13 16.2 L9.4 18.6 L10.6 14.4 L7 11.8 L11.4 11.6 Z" fill="#e8742c" />
    <path d="M16 21 H26 L24.5 27 Z" fill="#e8742c" />
  </svg>
);
const GreenFlag = () => (
  <svg width="27" height="27" viewBox="0 0 27 27" fill="none">
    <path d="M19.5 3 A12 12 0 1 0 24.8 9.5" stroke="url(#green)" strokeWidth="2.2" />
    <path d="M12 13.5 L23 3.5" stroke="#2f6b49" strokeWidth="4" />
    <path d="M8 14 L13.5 19 L7 20.5 Z" fill="#2f6b49" />
  </svg>
);
const ResetIcon = () => (
  <svg width="22" height="22" viewBox="0 0 22 22" fill="none">
    <path d="M3 6 A10 10 0 0 1 19 5" stroke="#4a8fae" strokeWidth="1.4" />
    <path d="M2 15 A10 10 0 0 0 18 18" stroke="#6fb0c4" strokeWidth="1.6" />
    <path d="M0 8 L6 9 L3 4 Z" fill="#3f7f9f" />
    <path d="M22 13 L17 13 L19 19 Z" fill="#3f7f9f" />
    <path d="M7 7 L15 15 M15 7 L7 15" stroke="#ec7f30" strokeWidth="2.2" />
  </svg>
);
const PointerSmall = () => (
  <svg width="24" height="25" viewBox="0 0 35 36" fill="none">
    <path d="M0 8 L19 21 L12 27 L9 25 L4 36 Z" fill="url(#sky)" />
    <path d="M8 2 L33 8 L26 14 L31 20 L25 25 L20 20 L15 26 Z" fill="#fff" stroke="#7c9a2a" strokeWidth="3" />
  </svg>
);
const CheckMark = () => (
  <svg width="20" height="20" viewBox="0 0 20 20" fill="none">
    <path d="M3 11 L8 17 L17 3" stroke="#fff" strokeWidth="3.6" />
  </svg>
);
const Tri = ({ flip }: { flip?: boolean }) => (
  <FlipSvg width="9" height="20" viewBox="0 0 9 20" $flip={flip}>
    <path d="M9 0 V20 L0 10 Z" fill="#111" />
  </FlipSvg>
);

/* ---------- data ---------- */
type NavItem = { label: string; icon: React.ReactNode; arrow?: boolean; on?: boolean; badge?: string };
const NAV: NavItem[] = [
  { label: "Dashboard", icon: <DashIcon /> },
  { label: "Products", icon: <ProductIcon />, arrow: true },
  { label: "Categories", icon: <CategoryIcon />, arrow: true, on: true },
  { label: "Stores", icon: <StoreIcon />, arrow: true },
  { label: "Planogram Projects", icon: <PlanogramIcon />, arrow: true },
  { label: "Standalone Planograms", icon: <StandaloneIcon />, arrow: true },
  { label: "Sales Data Sets", icon: <SalesIcon />, arrow: true },
  { label: "Recent Photos", icon: <PhotoIcon />, arrow: true },
  { label: "Actions", icon: <ActionsIcon />, arrow: true },
  { label: "Fixtures in Stores", icon: <FixtureIcon /> },
  { label: "Fixture Types", icon: <FixtureTypeIcon />, arrow: true },
  { label: "Messages", icon: <MessageIcon />, arrow: true, badge: "9+" },
  { label: "Blog", icon: <DotDoc stroke="url(#purple)" fill="#4a3f96" glyph="T" /> },
  { label: "Polls", icon: <DotDoc stroke="url(#pink)" fill="#cc2f93" glyph="?" /> },
  { label: "E-mails", icon: <MailIcon /> },
  { label: "Notifications", icon: <BellIcon />, arrow: true },
  { label: "Shelf Label Types", icon: <TagIcon /> },
];

type Cat = { name: string; date: string; id: string; color?: string; parent?: string; level: number; tog?: "d" | "r"; on?: boolean };
const CATS: Cat[] = [
  { name: "Shops", date: "12/2/2019, 2:05 PM", id: "CAT50", level: 0, tog: "d" },
  { name: "Chilled", date: "12/2/2019, 2:12 PM", id: "CAT52", parent: "Shops", level: 1, tog: "d" },
  { name: "Freezer", date: "2/24/2020, 6:40 AM", id: "CAT32", color: "#85cfae", parent: "Chilled", level: 2 },
  { name: "Refrigerators - Beer and ci...", date: "2/24/2020, 6:40 AM", id: "CAT43", color: "#a3dcbe", parent: "Chilled", level: 2 },
  { name: "Refrigerators - Counters", date: "1/6/2020, 4:03 AM", id: "CAT22", color: "#64649a", parent: "Chilled", level: 2 },
  { name: "Homemade", date: "2/24/2020, 6:42 AM", id: "CAT46", color: "#a4b334", parent: "Chilled", level: 2, on: true },
  { name: "Desserts and salty", date: "2/24/2020, 6:42 AM", id: "CAT45", color: "#f6c93f", parent: "Chilled", level: 2 },
  { name: "Freezer Richard", date: "1/6/2020, 4:05 AM", id: "CAT58", color: "#ea5fc6", parent: "Chilled", level: 2 },
  { name: "Refrigerator - Meat", date: "2/24/2020, 6:41 AM", id: "CAT47", color: "#bcecd6", parent: "Chilled", level: 2 },
  { name: "Refrigerators", date: "2/24/2020, 6:43 AM", id: "CAT17", color: "#cbd955", parent: "Chilled", level: 2 },
  { name: "Refrigerator - Non-alcoholic", date: "2/24/2020, 6:43 AM", id: "CAT48", color: "#e2f080", parent: "Chilled", level: 2 },
  { name: "Marketing", date: "8/2/2018, 2:43 AM", id: "CAT25", parent: "Shops", level: 1, tog: "r" },
  { name: "Pastry", date: "2/24/2020, 6:54 AM", id: "CAT30", color: "#bfa394", parent: "Shops", level: 1 },
  { name: "Fruits and vegetables", date: "2/24/2020, 6:55 AM", id: "CAT33", color: "#c9bfb6", parent: "Shops", level: 1 },
  { name: "Snacks", date: "2/24/2020, 6:55 AM", id: "CAT24", color: "#d8d5cb", parent: "Shops", level: 1 },
  { name: "Groceries", date: "9/21/2022, 4:50 AM", id: "CAT23", color: "#3e8426", parent: "Shops", level: 1, tog: "r" },
  { name: "Fridges", date: "1/8/2021, 7:46 AM", id: "CAT144", color: "#163209", level: 0 },
  { name: "Bike parts", date: "9/6/2022, 3:40 AM", id: "CAT205", color: "#f09498", level: 0 },
  { name: "Building materials", date: "5/23/2022, 6:33 AM", id: "CAT202", level: 0, tog: "r" },
  { name: "Fashion", date: "8/14/2020, 2:35 AM", id: "CAT59", color: "#3e8426", level: 0, tog: "r" },
  { name: "Replacements", date: "1/26/2023, 2:05 AM", id: "CAT210", color: "#c897f5", level: 0 },
  { name: "Freezers", date: "11/28/2022, 10:4...", id: "CAT209", level: 0 },
  { name: "Optik", date: "11/2/2021, 2:46 AM", id: "CAT199", level: 0, tog: "r" },
  { name: "Electronics", date: "1/8/2021, 4:54 AM", id: "CAT134", color: "#000080", level: 0, tog: "r" },
  { name: "Furniture", date: "2/28/2022, 5:22 AM", id: "CAT200", color: "#c8fcc8", level: 0 },
  { name: "Pet food", date: "1/6/2020, 4:01 AM", id: "CAT55", color: "#969696", level: 0 },
];

type Prop = {
  label: string;
  group?: boolean;
  gray?: boolean;
  flag?: "o" | "g";
  chk?: 0 | 1;
  text?: string;
  num?: string;
  reset?: boolean;
  on?: boolean;
};
const PROPS: Prop[] = [
  { label: "Note", reset: true },
  { label: "Managed by Planograms", chk: 0, reset: true },
  { label: "POS", chk: 0, reset: true },
  { label: "Show in Analysis", flag: "o", chk: 1 },
  { label: "Ordering", group: true },
  { label: "Automatic Ordering", flag: "o", chk: 0 },
  { label: "Automatic Ordering Definition", flag: "o", chk: 0 },
  { label: "Ordering Type", gray: true, flag: "o", text: "Standard" },
  { label: "Ordering Days", gray: true, flag: "o", text: "All Days" },
  { label: "Lead Time", gray: true, flag: "o", num: "1" },
  { label: "Min Days Reserve", gray: true, flag: "o", num: "3" },
  { label: "Max Days Reserve", gray: true, flag: "o", num: "14" },
  { label: "Min Ordering Volume", gray: true, flag: "o", num: "0" },
  { label: "Order Multiplications", gray: true, flag: "o", num: "0" },
  { label: "Allowed Excess of Maximum", gray: true, flag: "o", num: "100.00%" },
  { label: "Min Volume", gray: true, flag: "o", num: "0" },
  { label: "Max Volume", gray: true, flag: "o", num: "∞" },
  { label: "Max Coefficient", gray: true, flag: "o" },
  { label: "Hierarchy", group: true },
  { label: "Level", gray: true, num: "3" },
  { label: "Parent Category", gray: true, text: "Chilled" },
  { label: "Hierarchy Name", gray: true, text: "Shops | Chilled ..." },
  { label: "Products", group: true },
  { label: "Product Filter", text: "(SCC = Gastro |...", reset: true },
  { label: "Individually Assigned Products", text: "N0502330, N0...", reset: true },
  { label: "Replacements", group: true },
  { label: "Generate Replacements Automatically", flag: "g", chk: 1, reset: true },
  { label: "Only Products from Same Category", flag: "g", chk: 1, reset: true },
  { label: "Allowed Products", flag: "o" },
  { label: "Respect Original Products", flag: "g", chk: 1, reset: true },
  { label: "Only Products With Defined Replacement", flag: "g", chk: 1, reset: true },
  { label: "Exact Match Replacement Attributes", flag: "g", text: "[Brand]", reset: true },
  { label: "Broad Match Attributes", flag: "o", text: "[]" },
  { label: "Fixed Candidates Validity", flag: "o" },
  { label: "Fixed Candidates", flag: "o", text: "[]" },
  { label: "Max Replacement Age in Days", flag: "g", num: "60", reset: true },
  { label: "Replace Products with Store Stock Below", flag: "g", num: "3.00", reset: true },
  { label: "Sufficient Store Stock", flag: "g", num: "10.00", reset: true },
  { label: "Sufficient Store Stock Points", flag: "g", num: "20", reset: true },
  { label: "Respect Product Ranges", flag: "g", chk: 0, reset: true },
  { label: "Minus Points per Product Range Step", flag: "g", num: "0", reset: true },
  { label: "Price Level Step", flag: "g", num: "2", reset: true, on: true },
  { label: "Minus Points per Price Level Step", flag: "g", num: "30", reset: true },
  { label: "Do Not Replace if Sufficient Central Stock", flag: "o", chk: 0 },
  { label: "Sufficient Central Stock", flag: "o", num: "0.00" },
  { label: "Limit Measurements Change", flag: "o", chk: 0 },
  { label: "Max Measurement Change", gray: true, flag: "o", num: "0.00%" },
  { label: "Replenishment", group: true },
  { label: "Own Number of Packages per Model", chk: 0, reset: true },
];

/* ---------- rows ---------- */
const CatRow = ({ c }: { c: Cat }) => (
  <TRow $on={c.on}>
    <MarkCell $on={c.on}>
      <Toggle $level={c.level} $right={c.tog === "r"}>
        {c.tog === "d" && <ChevronDown />}
        {c.tog === "r" && <ChevronRight />}
      </Toggle>
      <Box />
    </MarkCell>
    <TCell $on={c.on} $sp={0.8}>{c.name}</TCell>
    <TCell $on={c.on} $sp={2.15}>{c.date}</TCell>
    <TCell $on={c.on} $sp={2}>{c.id}</TCell>
    <ColorCell $on={c.on}>
      <Bar $c={c.color} />
      <Corner $c={c.color ? "#2f7d46" : "#ee7a2c"} />
    </ColorCell>
    <ParentCell $on={c.on} $sp={0.5}>{c.parent ?? ""}</ParentCell>
  </TRow>
);

const PropRow = ({ p, zebra }: { p: Prop; zebra: boolean }) => {
  if (p.group) {
    return (
      <GroupRow>
        <GroupChevron>
          <ChevronDown s={16} />
        </GroupChevron>
        <GroupLabel>{p.label}</GroupLabel>
      </GroupRow>
    );
  }
  return (
    <PRow>
      <Gutter />
      <PLabel $gray={p.gray} $on={p.on} $z={zebra}>{p.label}</PLabel>
      <PCell $z={zebra}>
        {p.flag === "o" && <OrangeFlag />}
        {p.flag === "g" && <GreenFlag />}
      </PCell>
      <PValue
        $on={p.on}
        $z={zebra}
        $box={p.chk !== undefined}
        $align={p.chk !== undefined ? "center" : p.num ? "flex-end" : "flex-start"}
      >
        {p.chk !== undefined && <Box $on={p.chk === 1}>{p.chk === 1 && <CheckMark />}</Box>}
        {p.text}
        {p.num}
      </PValue>
      <PCell $z={zebra}>{p.reset && <ResetIcon />}</PCell>
      <PCell $z={zebra}><PointerSmall /></PCell>
      <PCell $z={zebra} />
    </PRow>
  );
};

const zebraFlags = (() => {
  let n = 0;
  return PROPS.map((p) => {
    if (p.group) {
      n = 0;
      return false;
    }
    n += 1;
    return n % 2 === 0;
  });
})();
zebraFlags[0] = true;
zebraFlags[1] = false;
zebraFlags[2] = true;
zebraFlags[3] = false;

export default function App() {
  return (
    <Page>
      <Global />
      <GradientDefs />
      <Window>
        <TitleBar>
          <Lights>
            <Light $c="#f4605c" $b="#dd4a46" />
            <Light $c="#f6bd3f" $b="#dfa52d" />
            <Light $c="#57c242" $b="#46a934" />
          </Lights>
          <Title>Quant Explorer - Categories</Title>
          <span />
        </TitleBar>
        <TopBar>
          <ToggleBtn><PanelIcon /></ToggleBtn>
          <TopIcon $ml={37}><StarIcon /></TopIcon>
          <TopIcon $ml={43}><ArrowIcon c="#ee7328" /></TopIcon>
          <TopIcon $ml={42}><ArrowIcon c="#8c8c8c" flip /></TopIcon>
          <TopSpacer />
          <TopIcon $ml={0}><SmileIcon /></TopIcon>
          <TopIcon $ml={20} />
        </TopBar>
        <Body>
          <LeftCol>
            <LeftTools>
              <CollapseIcon />
              <ToolGap $w={42} />
              <TableGear />
              <ToolGap $w={28} />
              <Search $w={333}><SearchGlass /></Search>
            </LeftTools>
            <ViewHead>View</ViewHead>
            <NavList>
              {NAV.map((n) => (
                <NavRow key={n.label} $on={n.on}>
                  <NavChevron>{n.arrow && <Chevron on={n.on} />}</NavChevron>
                  <NavIcon $on={n.on}>
                    {n.icon}
                    {n.badge && <Badge>{n.badge}</Badge>}
                  </NavIcon>
                  <NavLabel>{n.label}</NavLabel>
                </NavRow>
              ))}
            </NavList>
            <LogoArea>
              <LogoMark />
              <LogoText>Quant</LogoText>
            </LogoArea>
          </LeftCol>

          <Center>
            <Strip>
              <CheckDocs />
              <PlainDocs />
              <QuestionDocs />
              <PointerBig />
              <ClipIcon />
              <XDown />
              <XGear />
              <CsvIcon />
              <ExportTable />
              <ChartIcon />
            </Strip>
            <CenterMain>
              <CenterTools>
                <TableGear />
                <ToolGap $w={27} />
                <Search $w={260}><SearchGlass /></Search>
                <ToolGap $w={25} />
                <ToolButton $w={113} $mr={14}><PlusIcon />New</ToolButton>
                <ToolButton $w={118} $mr={13} $sp={-0.7}><SaveIcon />Save</ToolButton>
                <ToolButton $w={157} $mr={14}><ImportIcon />Imports</ToolButton>
                <ToolButton $w={284} $mr={12}><CustomIcon />Custom Properties</ToolButton>
                <ToolButton $w={124} $mr={0}><DotsIcon />More</ToolButton>
              </CenterTools>
              <TablePanel>
                <HeadRow>
                  <HeadCell>Marked</HeadCell>
                  <HeadCell>Name</HeadCell>
                  <HeadCell>Last Change</HeadCell>
                  <HeadCell>Id</HeadCell>
                  <HeadCell>Color</HeadCell>
                  <HeadCell>Parent<br />Category</HeadCell>
                </HeadRow>
                <TableRows>
                  {CATS.map((c) => <CatRow key={c.id} c={c} />)}
                </TableRows>
                <HScroll><HThumb /></HScroll>
              </TablePanel>
            </CenterMain>
          </Center>

          <Splitter>
            <Tri />
            <Tri flip />
            <Grip />
          </Splitter>

          <RightCol>
            <RightTools>
              <RightSearch $w={630}><SearchGlass /></RightSearch>
            </RightTools>
            <RightBody>
              <PropList>
                <PropInner>
                  {PROPS.map((p, i) => <PropRow key={p.label + i} p={p} zebra={zebraFlags[i]} />)}
                </PropInner>
              </PropList>
              <VTrack><VThumb /></VTrack>
            </RightBody>
          </RightCol>
        </Body>
      </Window>

      <Highlight />
      <BubbleShape width="1145" height="290" viewBox="0 0 1145 290" fill="none">
        <path
          d="M58 5 H874 Q926 5 926 62 V165 L1137 253 L926 231 Q926 282 874 282 H58 Q6 282 6 225 V62 Q6 5 58 5 Z"
          fill="#eff4f9"
          stroke="#3d7ab8"
          strokeWidth="6"
        />
      </BubbleShape>
      <BubbleText>
        If the candidate is more expensive/
        <br />
        cheaper by e.g., 2 USD, it will receive
        <br />
        a specified number of minus points.
      </BubbleText>
    </Page>
  );
}
